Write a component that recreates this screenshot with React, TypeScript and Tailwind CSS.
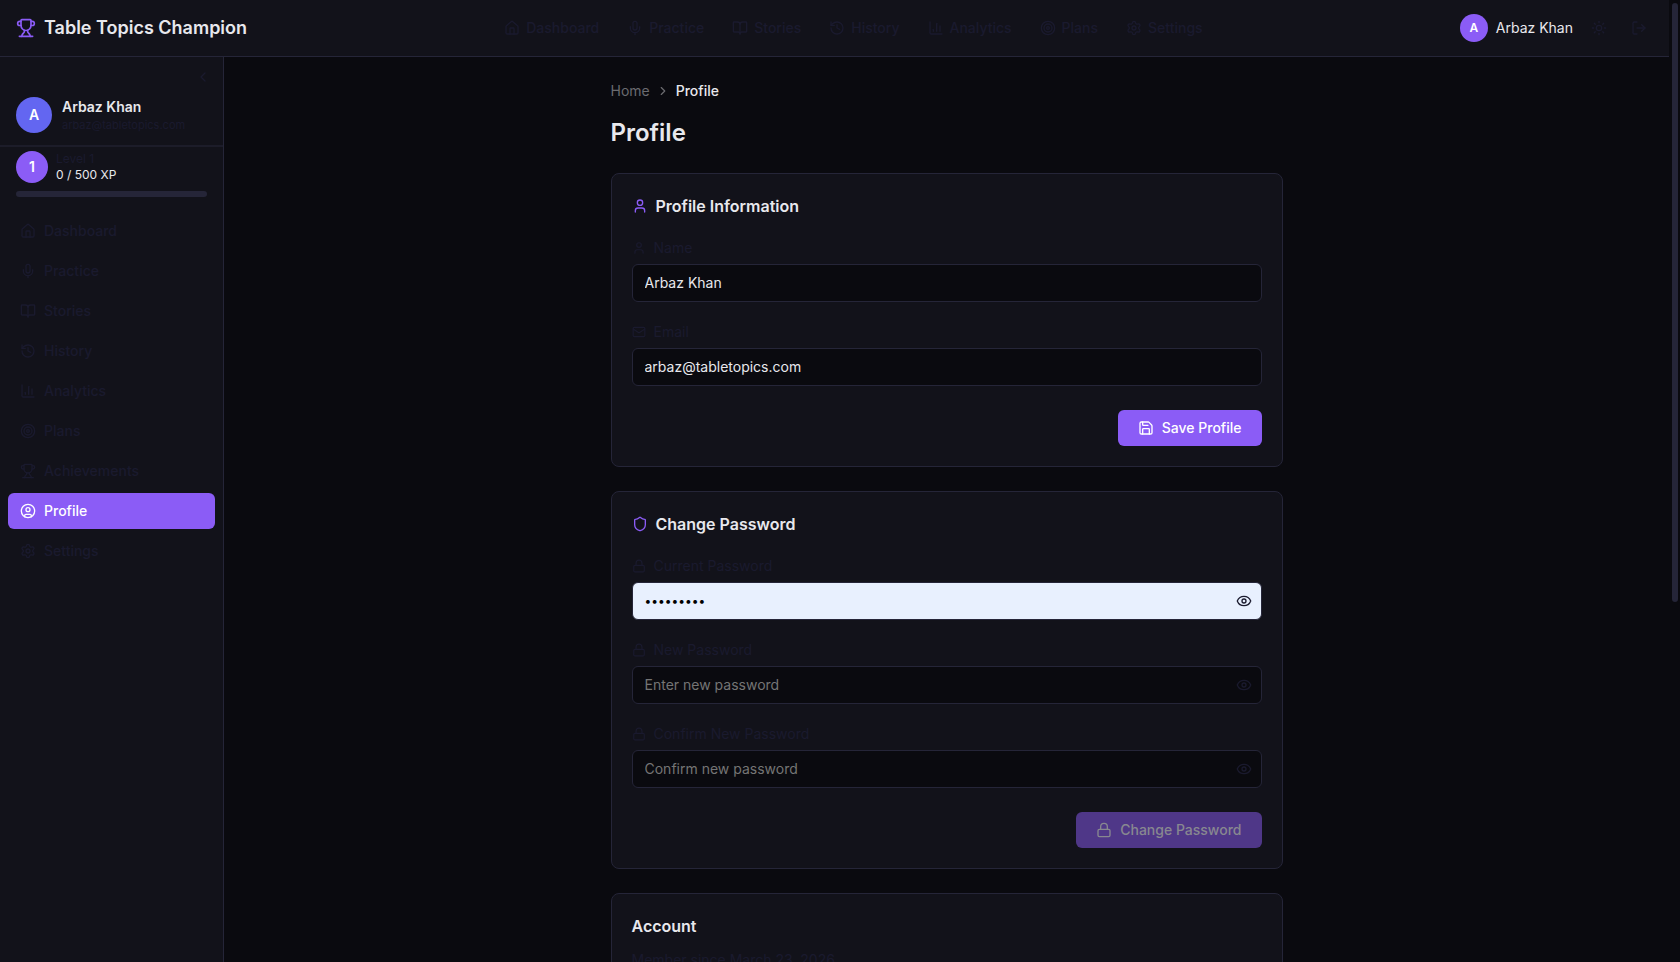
import { useState } from "react";
import {
  ChartColumn,
  BookOpen,
  ChevronLeft,
  ChevronRight,
  CircleUser,
  Eye,
  EyeOff,
  History,
  House,
  Lock,
  LogOut,
  Mail,
  Mic,
  Save,
  Settings,
  Shield,
  Sun,
  Target,
  Trophy,
  User,
  type LucideIcon,
} from "lucide-react";

type NavItem = { label: string; href: string; icon: LucideIcon };

const dashboard: NavItem = { label: "Dashboard", href: "#dashboard", icon: House };
const practice: NavItem = { label: "Practice", href: "#practice", icon: Mic };
const stories: NavItem = { label: "Stories", href: "#stories", icon: BookOpen };
const history: NavItem = { label: "History", href: "#history", icon: History };
const analytics: NavItem = { label: "Analytics", href: "#analytics", icon: ChartColumn };
const plans: NavItem = { label: "Plans", href: "#plans", icon: Target };
const achievements: NavItem = { label: "Achievements", href: "#achievements", icon: Trophy };
const profile: NavItem = { label: "Profile", href: "#profile", icon: CircleUser };
const settings: NavItem = { label: "Settings", href: "#settings", icon: Settings };

const topNav = [dashboard, practice, stories, history, analytics, plans, settings];
const sideNav = [dashboard, practice, stories, history, analytics, plans, achievements, profile, settings];

function Header() {
  return (
    <header className="flex shrink-0 items-center justify-between border-b border-[#252538] bg-[#12121a] px-4 py-3">
      <a href="#home" className="flex items-center gap-2 text-lg font-semibold">
        <Trophy size={20} className="text-[#8b5cf6]" />
        Table Topics Champion
      </a>
      <nav className="flex items-center gap-1">
        {topNav.map(({ label, href, icon: Icon }) => (
          <a key={label} href={href} className="flex items-center gap-1.5 rounded-md px-3 py-1.5 text-sm font-medium text-[#1a1a2e]">
            <Icon size={16} />
            {label}
          </a>
        ))}
      </nav>
      <div className="flex items-center gap-3">
        <a href="#profile" className="flex items-center gap-2 text-sm">
          <span className="flex size-7 items-center justify-center rounded-full bg-[#8b5cf6] text-xs font-semibold text-white">A</span>
          Arbaz Khan
        </a>
        <button type="button" aria-label="Toggle theme" className="p-1.5 text-[#1a1a2e]">
          <Sun size={16} />
        </button>
        <button type="button" aria-label="Log out" className="p-1.5 text-[#1a1a2e]">
          <LogOut size={16} />
        </button>
      </div>
    </header>
  );
}

function Sidebar() {
  return (
    <aside className="w-56 shrink-0 border-r border-[#252538] bg-[#12121a]">
      <div className="flex justify-end px-2 pt-2">
        <button type="button" aria-label="Collapse sidebar" className="p-1 text-[#1a1a2e]">
          <ChevronLeft size={16} />
        </button>
      </div>
      <div className="flex items-center gap-2.5 border-b-2 border-[#1c1c29] px-4 pt-2 pb-3">
        <span className="flex size-9 items-center justify-center rounded-full bg-[#6366f1] text-sm font-semibold text-white">A</span>
        <div>
          <p className="text-sm font-semibold">Arbaz Khan</p>
          <p className="text-[11px] leading-4 text-[#1a1a2e]">arbaz@tabletopics.com</p>
        </div>
      </div>
      <div className="px-4 pt-1">
        <div className="flex items-center gap-2">
          <span className="flex size-8 items-center justify-center rounded-full bg-[#8b5cf6] text-sm font-semibold text-white">1</span>
          <div className="text-xs">
            <p className="text-[#1a1a2e]">Level 1</p>
            <p>0 / 500 XP</p>
          </div>
        </div>
        <div className="mt-2 h-1.5 rounded-full bg-[#252538]" />
      </div>
      <nav className="mt-4 flex flex-col gap-1 px-2">
        {sideNav.map(({ label, href, icon: Icon }) => (
          <a
            key={label}
            href={href}
            className={
              label === "Profile"
                ? "flex items-center gap-2 rounded-md bg-[#8b5cf6] px-3 py-2 text-sm font-medium text-white"
                : "flex items-center gap-2 rounded-md px-3 py-2 text-sm font-medium text-[#1a1a2e]"
            }
          >
            <Icon size={16} />
            {label}
          </a>
        ))}
      </nav>
    </aside>
  );
}

type FieldProps = { id: string; label: string; icon: LucideIcon; type?: string; value?: string; placeholder?: string };

function Field({ id, label, icon: Icon, type = "text", value, placeholder }: FieldProps) {
  const [visible, setVisible] = useState(false);
  const isPassword = type === "password";
  const filled = isPassword && Boolean(value);

  return (
    <div>
      <label htmlFor={id} className="mb-1.5 flex items-center gap-2 text-sm text-[#1a1a2e]">
        <Icon size={14} />
        {label}
      </label>
      <div className="relative">
        <input
          id={id}
          type={visible ? "text" : type}
          defaultValue={value}
          placeholder={placeholder}
          className={
            filled
              ? "block w-full rounded-md border border-[#252538] bg-[#e8f0fe] px-3 py-2 text-xs leading-5 text-black outline-none"
              : "block w-full rounded-md border border-[#252538] bg-[#0a0a0f] px-3 py-2 text-sm outline-none placeholder:text-[#757575]"
          }
        />
        {isPassword && (
          <button
            type="button"
            aria-label={visible ? "Hide password" : "Show password"}
            onClick={() => setVisible(!visible)}
            className="absolute inset-y-0 right-2.5 flex items-center text-[#1a1a2e]"
          >
            {visible ? <EyeOff size={16} /> : <Eye size={16} />}
          </button>
        )}
      </div>
    </div>
  );
}

function App() {
  return (
    <div className="flex h-screen overflow-hidden bg-[#0a0a0f] font-['Inter',sans-serif] text-[#e8e8ed]">
      <div className="flex min-w-0 flex-1 flex-col">
        <Header />
        <div className="flex min-h-0 flex-1">
          <Sidebar />
          <main className="flex-1 overflow-y-auto p-6 [scrollbar-width:none]">
            <div className="mx-auto max-w-2xl">
              <nav aria-label="Breadcrumb" className="flex items-center gap-1.5 text-sm text-[#6b6b70]">
                <a href="#home">Home</a>
                <ChevronRight size={14} />
                <span className="font-medium text-[#e8e8ed]">Profile</span>
              </nav>
              <h1 className="mt-4 text-2xl font-semibold">Profile</h1>

              <div className="mt-6 space-y-6">
                <section className="rounded-lg border border-[#252538] bg-[#12121a] p-5">
                  <h2 className="flex items-center gap-2 text-base font-semibold">
                    <User size={16} className="text-[#8b5cf6]" />
                    Profile Information
                  </h2>
                  <form className="mt-5 space-y-5">
                    <Field id="name" label="Name" icon={User} value="Arbaz Khan" />
                    <Field id="email" label="Email" icon={Mail} type="email" value="arbaz@tabletopics.com" />
                    <div className="flex justify-end pt-1">
                      <button type="button" className="flex items-center gap-2 rounded-md bg-[#8b5cf6] px-5 py-2 text-sm font-medium text-white">
                        <Save size={16} />
                        Save Profile
                      </button>
                    </div>
                  </form>
                </section>

                <section className="rounded-lg border border-[#252538] bg-[#12121a] p-5">
                  <h2 className="flex items-center gap-2 text-base font-semibold">
                    <Shield size={16} className="text-[#8b5cf6]" />
                    Change Password
                  </h2>
                  <form className="mt-5 space-y-5">
                    <Field id="current-password" label="Current Password" icon={Lock} type="password" value="password1" />
                    <Field id="new-password" label="New Password" icon={Lock} type="password" placeholder="Enter new password" />
                    <Field id="confirm-password" label="Confirm New Password" icon={Lock} type="password" placeholder="Confirm new password" />
                    <div className="flex justify-end pt-1">
                      <button type="button" disabled className="flex items-center gap-2 rounded-md bg-[#4f3788] px-5 py-2 text-sm font-medium text-[#888890]">
                        <Lock size={16} />
                        Change Password
                      </button>
                    </div>
                  </form>
                </section>

                <section className="rounded-lg border border-[#252538] bg-[#12121a] p-5">
                  <h2 className="text-base font-semibold">Account</h2>
                  <p className="mt-3 text-sm text-[#1a1a2e]">Member since March 23, 2026</p>
                </section>
              </div>
            </div>
          </main>
        </div>
      </div>
      {/* scroll track */}
      <div className="h-full shrink-0 pt-[3px] pr-0.5 pl-[3px]">
        <div className="h-5/8 w-1.5 rounded-full bg-[#252538]" />
      </div>
    </div>
  );
}

export default App;
